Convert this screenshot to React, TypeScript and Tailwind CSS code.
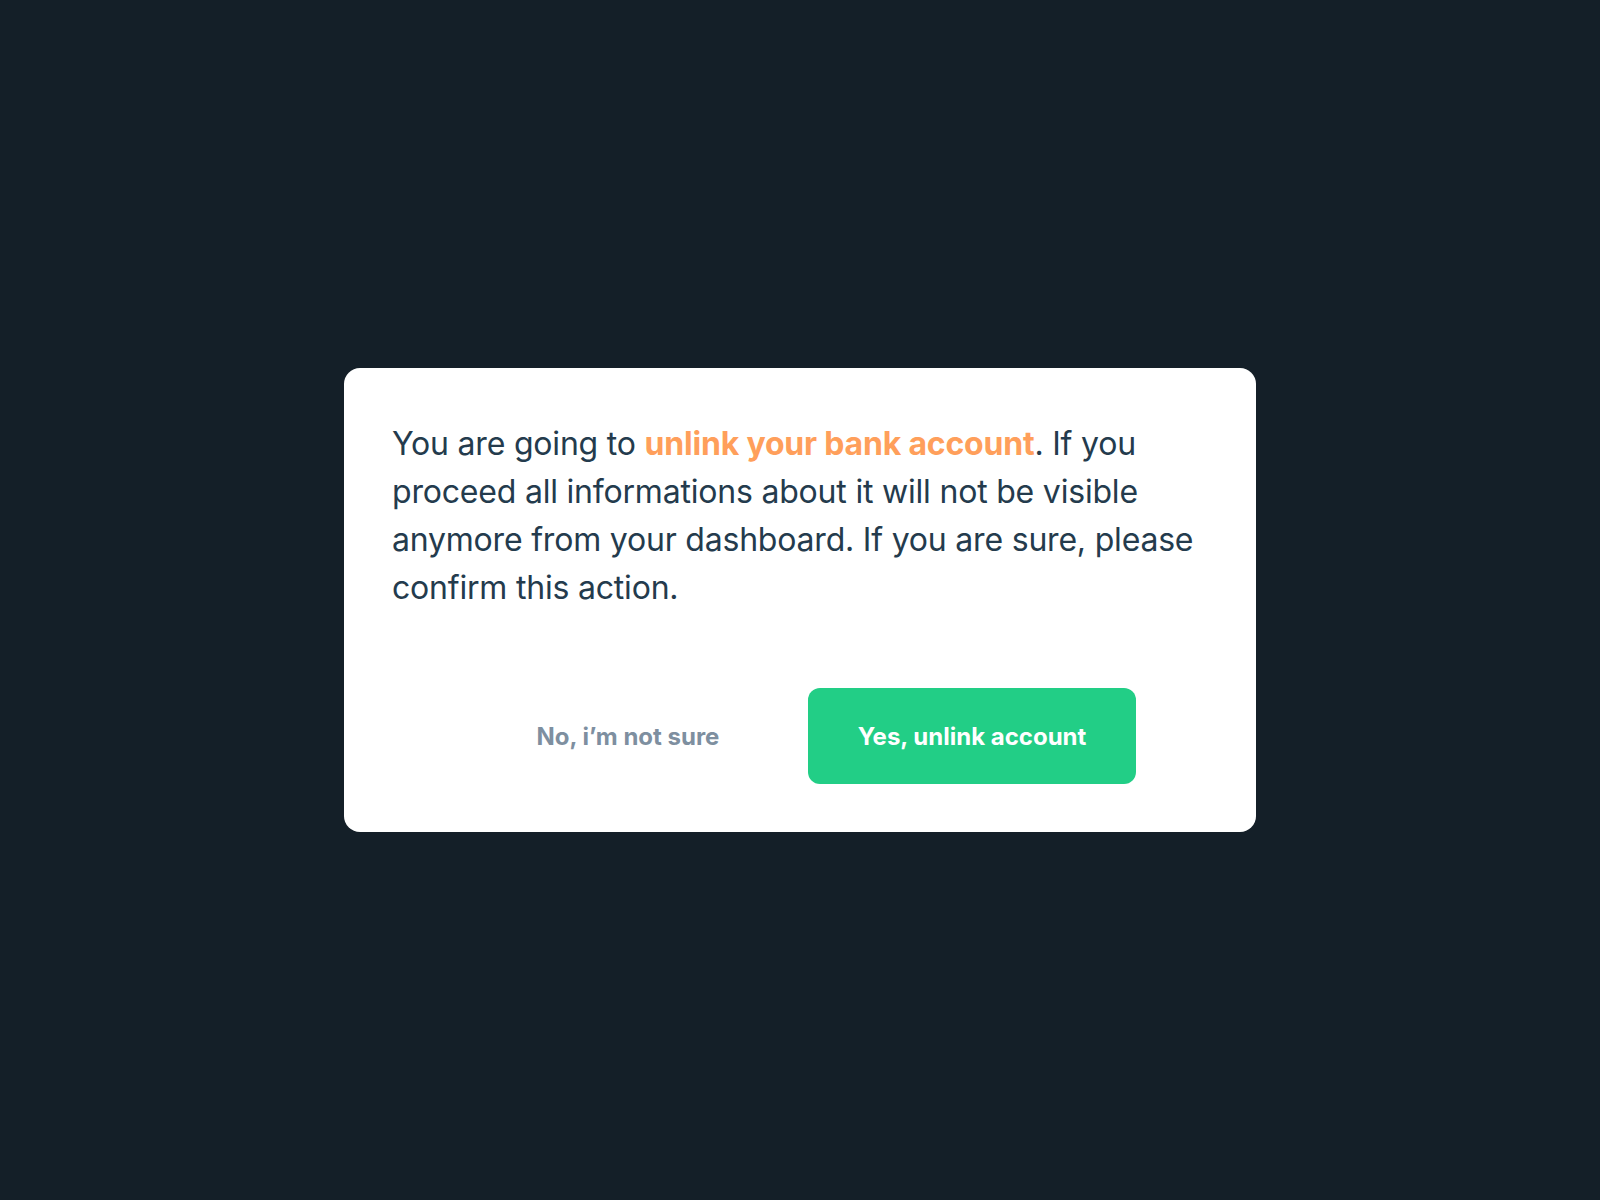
import React from "react";

export default function App() {
  return (
    <div className="w-full min-h-[1200px] bg-[#141f28] flex items-center justify-center" style={{ fontFamily: "Inter, 'Liberation Sans', sans-serif" }}>
      <div className="w-[912px] h-[464px] bg-white rounded-2xl p-12 flex flex-col">
        <p className="text-[32px] leading-[48px] text-[#243b4d] tracking-[-0.2px] pt-[4px]">
          You are going to <span className="font-bold text-[#ff9f5b]">unlink your bank account</span>. If you proceed all informations about it will not be visible anymore from your dashboard. If you are sure, please confirm this action.
        </p>
        <div className="mt-auto flex justify-center gap-4">
          <button className="w-[328px] h-[96px] rounded-xl text-[24px] font-bold text-[#7e8fa0] pt-[2px]">No, i’m not sure</button>
          <button className="w-[328px] h-[96px] rounded-xl bg-[#22ce86] text-[24px] font-bold text-white pt-[2px]">Yes, unlink account</button>
        </div>
      </div>
    </div>
  );
}
